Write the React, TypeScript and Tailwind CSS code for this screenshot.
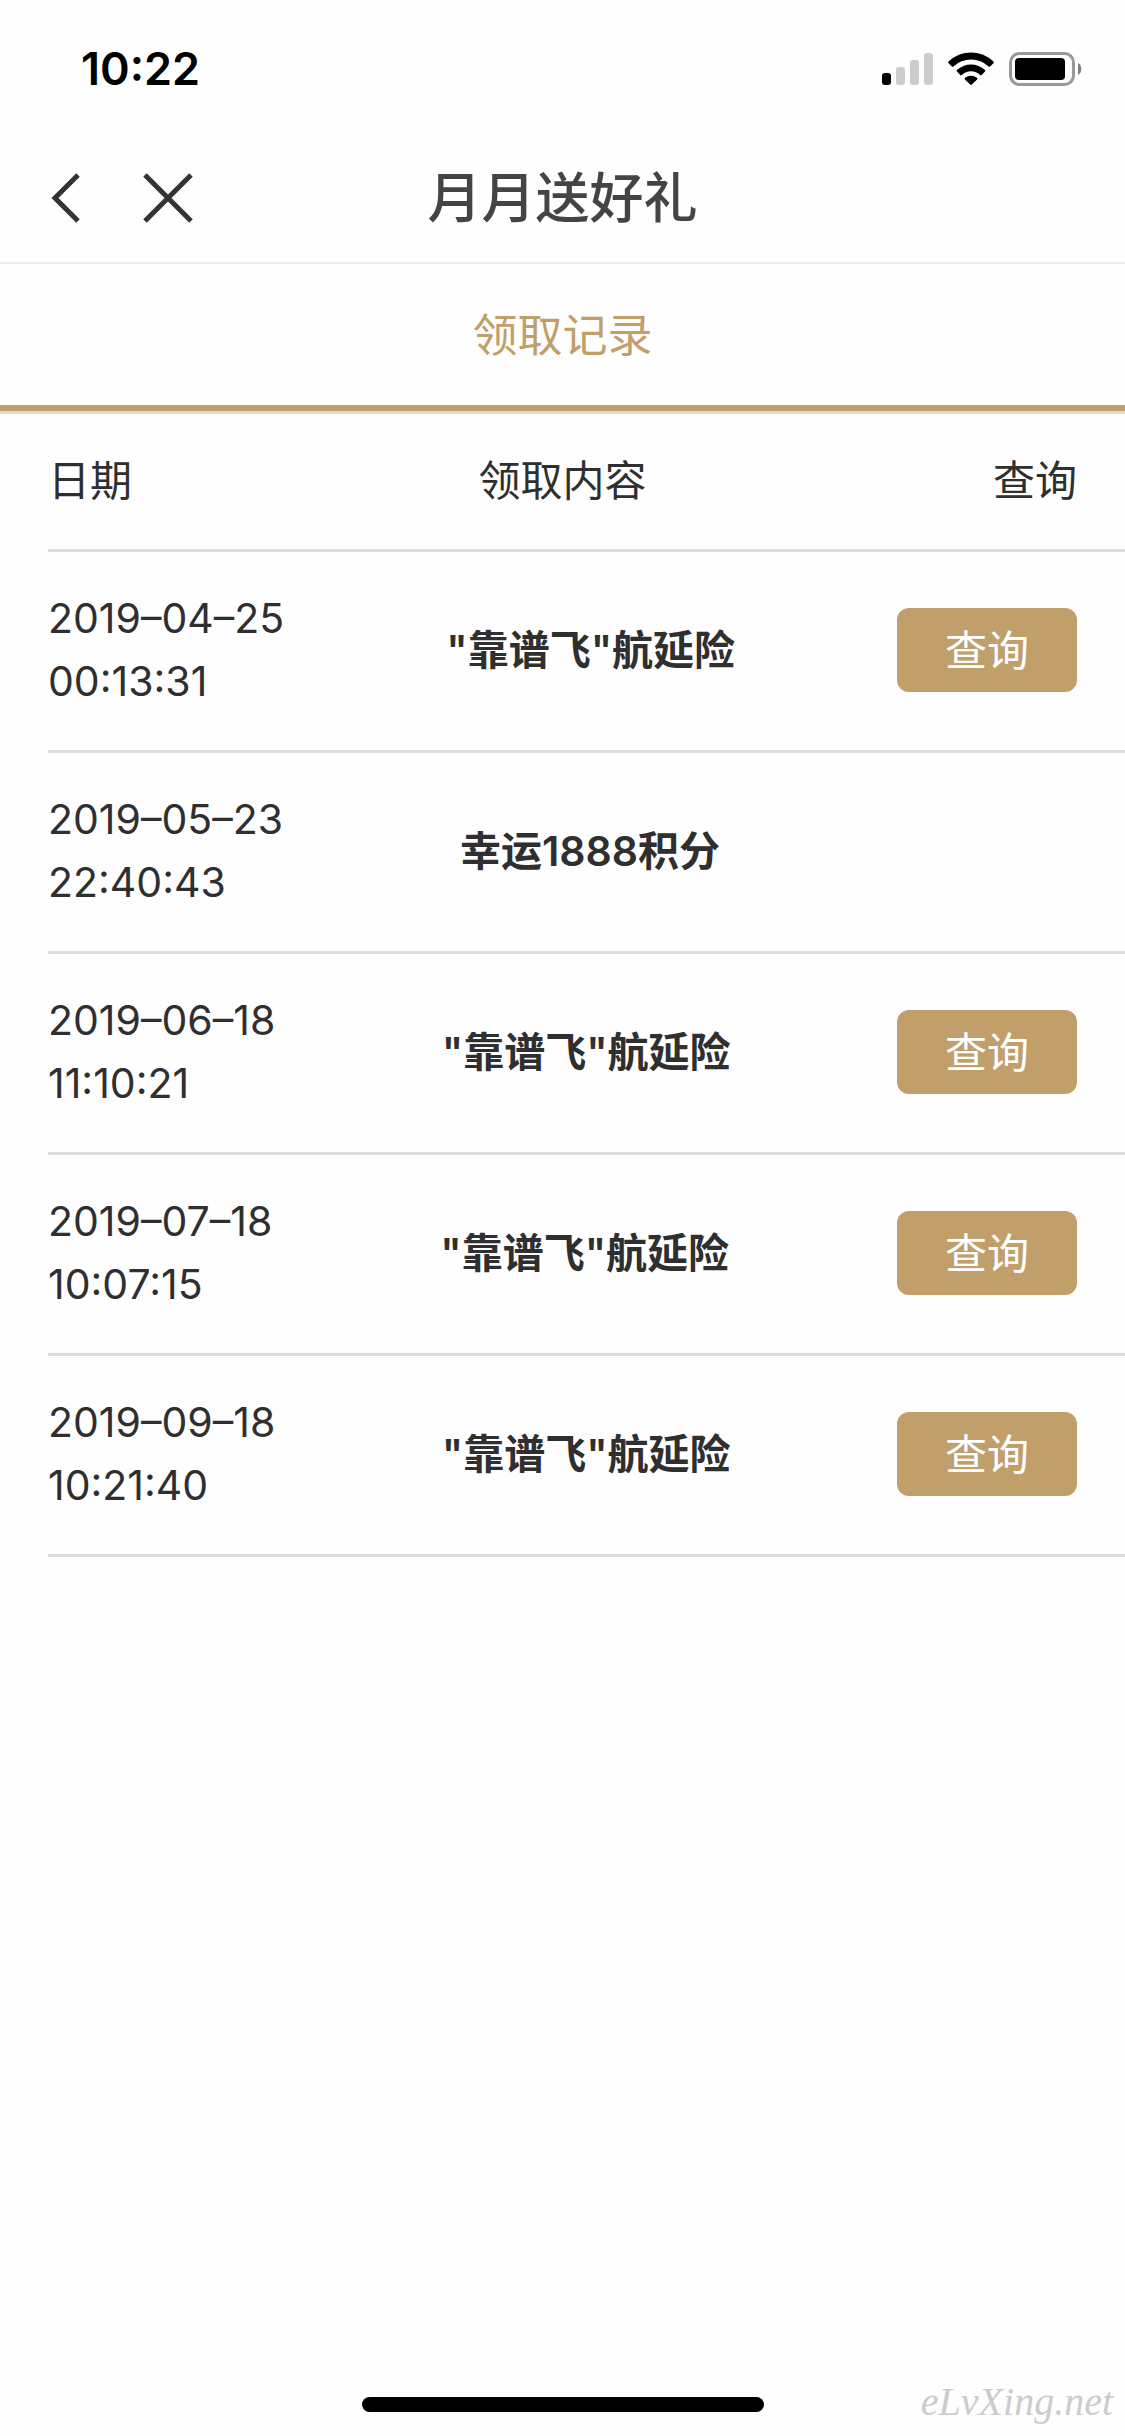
type GiftRecord = {
  date: string;
  time: string;
  name: string;
  canQuery: boolean;
};

const records: GiftRecord[] = [
  { date: "2019–04–25", time: "00:13:31", name: '"靠谱飞"航延险', canQuery: true },
  { date: "2019–05–23", time: "22:40:43", name: "幸运1888积分", canQuery: false },
  { date: "2019–06–18", time: "11:10:21", name: '"靠谱飞"航延险', canQuery: true },
  { date: "2019–07–18", time: "10:07:15", name: '"靠谱飞"航延险', canQuery: true },
  { date: "2019–09–18", time: "10:21:40", name: '"靠谱飞"航延险', canQuery: true },
];

function StatusBar() {
  return (
    <div className="flex h-[132px] items-center justify-between pt-[6px] pr-[43px] pl-[81px] text-black">
      <span className="text-[45px] leading-[54px] font-semibold">10:22</span>

      <div className="flex items-center gap-[15px]">
        <svg width="51" height="34" viewBox="0 0 51 34" aria-hidden="true">
          <rect x="0" y="21" width="9" height="12" rx="3" fill="#000" />
          <rect x="14" y="15" width="9" height="18" rx="3" fill="#ccc" />
          <rect x="28" y="8" width="9" height="25" rx="3" fill="#ccc" />
          <rect x="42" y="1" width="9" height="32" rx="3" fill="#ccc" />
        </svg>
        <svg width="46" height="34" viewBox="0 0 46 34" aria-hidden="true">
          <path d="M0.6 9.6a32 32 0 0 1 44.8 0q.8.8 0 1.600l-3.300 3.300q-.7.700-1.500 0a25.500 25.500 0 0 0-35.200 0q-.8.700-1.500 0L.6 11.200q-.8-.8 0-1.600Z" />
          <path d="M9 18a20.500 20.500 0 0 1 28 0q.8.8 0 1.600l-3.300 3.300q-.8.700-1.600 0a13.500 13.500 0 0 0-18.200 0q-.8.700-1.600 0L9 19.600q-.8-.8 0-1.600Z" />
          <path d="M17 25.800a9.500 9.500 0 0 1 12 0q.9.8.1 1.600l-5.300 5.200q-.8.800-1.600 0l-5.300-5.200q-.8-.8.1-1.600Z" />
        </svg>
        <svg width="73" height="34" viewBox="0 0 73 34" aria-hidden="true">
          <rect x="1.500" y="1.500" width="63" height="31" rx="9" fill="none" stroke="#999" strokeWidth="3" />
          <rect x="6" y="6" width="50" height="22" rx="4" fill="#000" />
          <path d="M69 11a7 7 0 0 1 0 12Z" fill="#808080" />
        </svg>
      </div>
    </div>
  );
}

function NavBar() {
  return (
    <header className="grid h-[132px] grid-cols-[1fr_auto_1fr] items-center border-b-2 border-[#ececec] px-12 pt-[2px]">
      <div className="flex items-center gap-[60px]">
        <button type="button" aria-label="返回">
          <svg width="35" height="50" viewBox="0 0 35 50" fill="none" stroke="#333" strokeWidth="5">
            <path d="M30 2 7 25l23 23" />
          </svg>
        </button>
        <button type="button" aria-label="关闭">
          <svg width="50" height="50" viewBox="0 0 50 50" fill="none" stroke="#333" strokeWidth="5">
            <path d="m2 2 46 46M48 2 2 48" />
          </svg>
        </button>
      </div>
      <h1 className="pt-[2px] text-[54px] leading-[66px] font-medium text-[#444]">月月送好礼</h1>
    </header>
  );
}

function RecordRow({ record }: { record: GiftRecord }) {
  return (
    <tr className="flex items-center justify-between border-b-3 border-[#dcdcdc] pt-[35px] pr-12 pb-[37px]">
      <td className="text-[41px] leading-[63px]">
        {record.date}
        <br />
        {record.time}
      </td>
      <td className="text-[41px] leading-[63px] font-semibold">{record.name}</td>
      <td className="flex w-[180px]">
        {record.canQuery && (
          <button type="button" className="h-[84px] w-full rounded-xl bg-[#c19f6b] text-white">
            查询
          </button>
        )}
      </td>
    </tr>
  );
}

export default function App() {
  return (
    <div
      lang="zh-CN"
      className="relative flex min-h-screen flex-col bg-[#fefefe] font-['Inter','Noto_Sans_CJK_SC',sans-serif] text-[#2f2f2f]"
    >
      <StatusBar />
      <NavBar />

      <nav className="border-b-3 border-[#e3dccf]">
        <a
          href="#records"
          className="flex h-[147px] items-center justify-center border-b-6 border-[#bf9f6c] pt-[2px] text-[45px] text-[#c19f6b]"
        >
          领取记录
        </a>
      </nav>

      <main id="records" className="flex-1 pl-12">
        <table className="block text-[42px]">
          <thead className="block">
            <tr className="flex h-[138px] items-center justify-between border-b-3 border-[#dcdcdc] pr-12 pb-[2px]">
              <th className="font-normal">日期</th>
              <th className="font-normal">领取内容</th>
              <th className="font-normal">查询</th>
            </tr>
          </thead>
          <tbody className="block">
            {records.map((record) => (
              <RecordRow key={record.date} record={record} />
            ))}
          </tbody>
        </table>
      </main>

      <footer className="flex justify-center pb-6">
        <div className="h-[15px] w-[402px] rounded-full bg-black" />
        <span className="absolute right-3 bottom-[10px] font-['Liberation_Serif',cursive] text-[40px] leading-[48px] text-[#ccc] italic">
          eLvXing.net
        </span>
      </footer>
    </div>
  );
}
